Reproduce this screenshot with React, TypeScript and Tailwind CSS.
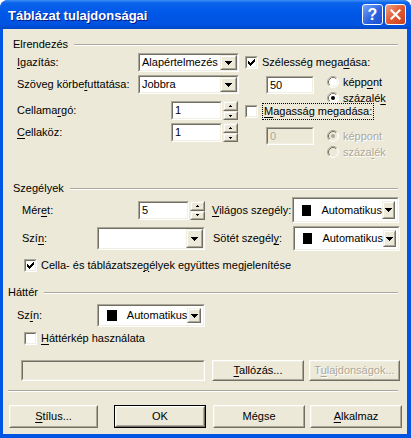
import React from 'react'

const FONT = "font-['Liberation_Sans',Arial,sans-serif]"

function U({ c }: { c: string }) {
  return <span className="underline decoration-1 underline-offset-[2px]">{c}</span>
}

function Sunken({
  className = '',
  inner = '',
  children,
}: {
  className?: string
  inner?: string
  children?: React.ReactNode
}) {
  return (
    <div className={`border border-t-[#aca899] border-l-[#aca899] border-r-white border-b-white ${className}`}>
      <div className={`flex h-full w-full border border-t-[#716f64] border-l-[#716f64] border-r-[#f1efe2] border-b-[#f1efe2] ${inner}`}>
        {children}
      </div>
    </div>
  )
}

function Raised({ className = '', children }: { className?: string; children?: React.ReactNode }) {
  return (
    <div className={`border border-t-[#f1efe2] border-l-[#f1efe2] border-r-[#716f64] border-b-[#716f64] bg-[#ece9d8] ${className}`}>
      <div className="flex h-full w-full items-center justify-center border border-t-white border-l-white border-r-[#aca899] border-b-[#aca899]">
        {children}
      </div>
    </div>
  )
}

function Arrow() {
  return (
    <svg width="7" height="4" shapeRendering="crispEdges">
      <path d="M0 0h7v1h-1v1h-1v1h-1v1h-1v-1h-1v-1h-1v-1h-1z" fill="#000" />
    </svg>
  )
}

function SmallArrow({ up }: { up?: boolean }) {
  return (
    <svg width="3" height="2" shapeRendering="crispEdges">
      {up ? <path d="M1 0h1v1h1v1h-3v-1h1z" fill="#000" /> : <path d="M0 0h3v1h-1v1h-1v-1h-1z" fill="#000" />}
    </svg>
  )
}

function Dropdown({ w, h, text }: { w: string; h: string; text?: string }) {
  return (
    <Sunken className={`${w} ${h}`} inner="bg-white">
      <span className="flex flex-1 items-center pl-[2px]">{text}</span>
      <Raised className="h-full w-[17px]">
        <Arrow />
      </Raised>
    </Sunken>
  )
}

function ColorCombo({ w, h }: { w: string; h: string }) {
  return (
    <Sunken className={`${w} ${h}`} inner="bg-white items-center p-[2px]">
      <span className="ml-[6px] h-[11px] w-[11px] bg-black" />
      <span className="ml-[10px] flex-1 whitespace-nowrap">Automatikus</span>
      <Raised className="h-full w-[15px]">
        <Arrow />
      </Raised>
    </Sunken>
  )
}

function Spinner({ value, w }: { value: string; w: string }) {
  return (
    <div className="flex h-[19px]">
      <Sunken className={`${w} h-full`} inner="bg-white items-center pl-[2px]">
        {value}
      </Sunken>
      <div className="ml-[1px] flex w-[15px] flex-col">
        <Raised className="h-[10px] w-full">
          <SmallArrow up />
        </Raised>
        <Raised className="h-[9px] w-full">
          <SmallArrow />
        </Raised>
      </div>
    </div>
  )
}

function Check({ checked }: { checked?: boolean }) {
  return (
    <Sunken className="h-[13px] w-[13px] shrink-0" inner="bg-white items-center justify-center">
      {checked && (
        <svg width="7" height="7" shapeRendering="crispEdges">
          <path d="M6 0h1v3h-1v1h-1v1h-1v1h-1v1h-1v-1h-1v-1h-1v-1h-1v-3h1v1h1v1h1v1h1v-1h1v-1h1v-1h1z" fill="#000" />
        </svg>
      )}
    </Sunken>
  )
}

function Radio({ checked, disabled }: { checked?: boolean; disabled?: boolean }) {
  const fill = disabled ? '#ece9d8' : '#fff'
  return (
    <svg width="12" height="12" className="shrink-0">
      <circle cx="6" cy="6" r="5.5" fill={fill} />
      <path d="M2.11 9.89 A5.5 5.5 0 0 1 9.89 2.11" stroke="#aca899" fill="none" />
      <path d="M9.89 2.11 A5.5 5.5 0 0 1 2.11 9.89" stroke="#fff" fill="none" />
      <path d="M2.82 9.18 A4.5 4.5 0 0 1 9.18 2.82" stroke="#716f64" fill="none" />
      <path d="M9.18 2.82 A4.5 4.5 0 0 1 2.82 9.18" stroke="#f1efe2" fill="none" />
      {checked && <circle cx="6" cy="6" r="2" fill={disabled ? '#aca899' : '#000'} />}
    </svg>
  )
}

function Etched({ className = '' }: { className?: string }) {
  return <div className={`h-0 border-t border-b border-t-[#aca899] border-b-white ${className}`} />
}

function Header({ label, pl, gap }: { label: string; pl: string; gap: string }) {
  return (
    <div className={`flex h-[13px] items-center pr-[9px] ${pl}`}>
      <span className="leading-[13px]">{label}</span>
      <Etched className={`flex-1 ${gap}`} />
    </div>
  )
}

function Btn({
  className = '',
  children,
  def,
  disabled,
}: {
  className?: string
  children: React.ReactNode
  def?: boolean
  disabled?: boolean
}) {
  return (
    <div className={`${def ? 'border border-black' : ''} ${className}`}>
      <div className="h-full border border-t-white border-l-white border-r-[#716f64] border-b-[#716f64]">
        <div
          className={`flex h-full items-center justify-center border border-t-[#f1efe2] border-l-[#f1efe2] border-r-[#aca899] border-b-[#aca899] bg-[#ece9d8] ${
            disabled ? 'text-[#aca899] [text-shadow:1px_1px_0_#fff]' : ''
          }`}
        >
          {children}
        </div>
      </div>
    </div>
  )
}

function TitleBar() {
  return (
    <div className="flex h-[29px] items-center pl-[8px] pr-[5px] bg-[linear-gradient(to_bottom,#3d8ff5_0%,#0a62ec_10%,#0058e8_45%,#0053e0_85%,#0047c6_100%)]">
      <span className="pt-[2px] text-[13px] font-bold text-white [text-shadow:1px_1px_0_#0a1883]">
        Táblázat tulajdonságai
      </span>
      <div className="ml-auto flex gap-[2px]">
        <div className="flex h-[21px] w-[21px] items-center justify-center rounded-[3px] border border-white bg-[linear-gradient(135deg,#7aa5f7_0%,#2c63e0_55%,#1c4fd0_100%)] text-[16px] font-bold leading-none text-white">
          ?
        </div>
        <div className="flex h-[21px] w-[21px] items-center justify-center rounded-[3px] border border-white bg-[linear-gradient(135deg,#f0a080_0%,#e05a32_50%,#c8401a_100%)]">
          <svg width="11" height="11">
            <path d="M1.5 1.5 L9.5 9.5 M9.5 1.5 L1.5 9.5" stroke="#fff" strokeWidth="2.2" strokeLinecap="square" />
          </svg>
        </div>
      </div>
    </div>
  )
}

export default function App() {
  return (
    <div className={`${FONT} h-[438px] w-[411px] overflow-hidden rounded-t-[8px] bg-[#0055e5] text-[11px] text-black`}>
      <TitleBar />
      <div className="ml-[3px] mr-[4px] h-[405px] bg-[#ece9d8] pt-[9px]">
        {/* Elrendezés */}
        <Header label="Elrendezés" pl="pl-[10px]" gap="ml-[6px]" />
        <div className="mt-[2px] flex h-[107px]">
          <div className="ml-[14px] flex w-[222px] flex-col">
            <div className="flex h-[19px] items-center">
              <span className="w-[121px]">
                <U c="I" />
                gazítás:
              </span>
              <Dropdown w="w-[101px]" h="h-[19px]" text="Alapértelmezés" />
            </div>
            <div className="mt-[3px] flex h-[19px] items-center">
              <span className="w-[121px]">
                Szöveg körbe
                <U c="f" />
                uttatása:
              </span>
              <Dropdown w="w-[101px]" h="h-[19px]" text="Jobbra" />
            </div>
            <div className="mt-[7px] flex h-[19px] items-center">
              <span className="w-[154px]">
                Cellama
                <U c="r" />
                gó:
              </span>
              <Spinner value="1" w="w-[51px]" />
            </div>
            <div className="mt-[3px] flex h-[19px] items-center">
              <span className="w-[154px]">
                <U c="C" />
                ellaköz:
              </span>
              <Spinner value="1" w="w-[51px]" />
            </div>
          </div>
          <div className="ml-[6px] flex flex-col">
            <div className="flex h-[19px] items-center gap-[4px]">
              <Check checked />
              <span className="whitespace-nowrap">
                Szélesség mega
                <U c="d" />
                ása:
              </span>
            </div>
            <div className="mt-[2px] flex h-[28px] pl-[21px]">
              <Sunken className="mt-[2px] h-[18px] w-[48px]" inner="bg-white items-center pl-[2px]">
                50
              </Sunken>
              <div className="ml-[13px] flex flex-col">
                <div className="flex h-[16px] items-center gap-[4px]">
                  <Radio />
                  <span>
                    képp
                    <U c="o" />
                    nt
                  </span>
                </div>
                <div className="flex h-[16px] items-center gap-[4px]">
                  <Radio checked />
                  <span>
                    százalé
                    <U c="k" />
                  </span>
                </div>
              </div>
            </div>
            <div className="flex h-[19px] items-center gap-[4px]">
              <Check />
              <span className="whitespace-nowrap border border-dotted border-black px-[1px] leading-[15px]">
                <U c="M" />
                agasság megadása:
              </span>
            </div>
            <div className="mt-[5px] flex h-[34px] pl-[21px]">
              <Sunken className="mt-[1px] h-[18px] w-[48px]" inner="bg-[#ece9d8] items-center pl-[2px] text-[#aca899]">
                0
              </Sunken>
              <div className="ml-[13px] mt-[2px] flex flex-col text-[#aca899] [text-shadow:1px_1px_0_#fff]">
                <div className="flex h-[16px] items-center gap-[4px]">
                  <Radio checked disabled />
                  <span>képpont</span>
                </div>
                <div className="flex h-[16px] items-center gap-[4px]">
                  <Radio disabled />
                  <span>
                    száza
                    <U c="l" />
                    ék
                  </span>
                </div>
              </div>
            </div>
          </div>
        </div>

        {/* Szegélyek */}
        <div className="mt-[22px]">
          <Header label="Szegélyek" pl="pl-[10px]" gap="ml-[6px]" />
        </div>
        <div className="ml-[19px] mt-[2px] flex h-[26px] items-center">
          <span className="w-[116px]">
            Mér
            <U c="e" />
            t:
          </span>
          <Spinner value="5" w="w-[51px]" />
          <span className="ml-[7px] w-[80px] whitespace-nowrap">
            <U c="V" />
            ilágos szegély:
          </span>
          <ColorCombo w="w-[107px]" h="h-[26px]" />
        </div>
        <div className="ml-[19px] mt-[3px] flex h-[25px] items-center">
          <span className="w-[75px]">
            Szí
            <U c="n" />:
          </span>
          <Dropdown w="w-[108px]" h="h-[23px]" />
          <span className="ml-[8px] w-[80px] whitespace-nowrap">
            Sötét szegél
            <U c="y" />:
          </span>
          <ColorCombo w="w-[107px]" h="h-[25px]" />
        </div>
        <div className="ml-[21px] mt-[6px] flex h-[16px] items-center gap-[4px]">
          <Check checked />
          <span>
            Cella- és táblázatsze
            <U c="g" />
            élyek együttes megjelenítése
          </span>
        </div>

        {/* Háttér */}
        <div className="mt-[13px]">
          <Header label="Háttér" pl="pl-[5px]" gap="ml-[6px]" />
        </div>
        <div className="ml-[14px] mt-[5px] flex h-[23px] items-center">
          <span className="w-[80px]">
            Sz
            <U c="í" />
            n:
          </span>
          <ColorCombo w="w-[108px]" h="h-[23px]" />
        </div>
        <div className="ml-[21px] mt-[3px] flex h-[16px] items-center gap-[4px]">
          <Check />
          <span>
            <U c="H" />
            áttérkép használata
          </span>
        </div>
        <div className="ml-[18px] mt-[14px] flex h-[21px]">
          <Sunken className="h-full w-[184px]" inner="bg-[#ece9d8]" />
          <Btn className="ml-[7px] h-full w-[92px]">
            <span>
              <U c="T" />
              allózás...
            </span>
          </Btn>
          <Btn className="ml-[5px] h-full w-[91px]" disabled>
            <span>
              T<U c="u" />
              lajdonságok...
            </span>
          </Btn>
        </div>

        <Etched className="ml-[5px] mr-[9px] mt-[9px]" />

        <div className="ml-[6px] mt-[13px] flex h-[23px]">
          <Btn className="h-full w-[89px]">
            <span>
              <U c="S" />
              tílus...
            </span>
          </Btn>
          <Btn className="ml-[16px] h-full w-[92px]" def>
            OK
          </Btn>
          <Btn className="ml-[7px] h-full w-[92px]">Mégse</Btn>
          <Btn className="ml-[5px] h-full w-[92px]">
            <span>
              <U c="A" />
              lkalmaz
            </span>
          </Btn>
        </div>
      </div>
    </div>
  )
}
